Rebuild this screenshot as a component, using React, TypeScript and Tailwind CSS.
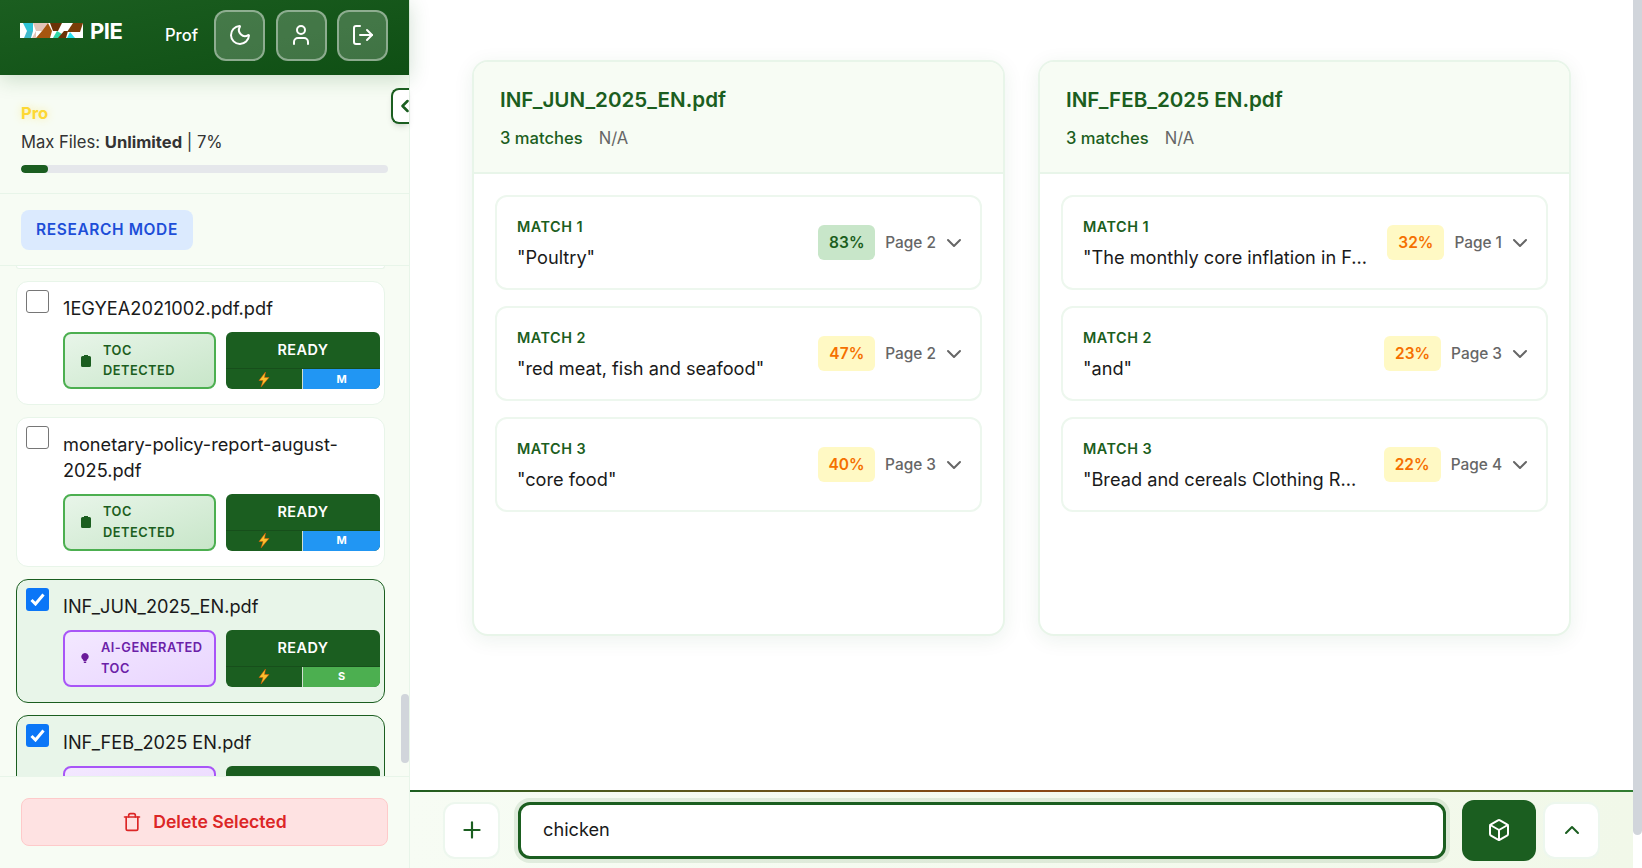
import React from "react";
import { Box, ChevronDown, ChevronLeft, ChevronUp, LogOut, Moon, Plus, Trash, User } from "lucide-react";

interface FileItem {
  name: string;
  checked: boolean;
  ai: boolean;
  size: "M" | "S";
}

interface MatchItem {
  text: string;
  score: number;
  page: number;
}

const files: FileItem[] = [
  { name: "1EGYEA2021002.pdf.pdf", checked: false, ai: false, size: "M" },
  { name: "monetary-policy-report-august-2025.pdf", checked: false, ai: false, size: "M" },
  { name: "INF_JUN_2025_EN.pdf", checked: true, ai: true, size: "S" },
  { name: "INF_FEB_2025 EN.pdf", checked: true, ai: true, size: "S" },
];

const results: { name: string; matches: MatchItem[] }[] = [
  {
    name: "INF_JUN_2025_EN.pdf",
    matches: [
      { text: '"Poultry"', score: 83, page: 2 },
      { text: '"red meat, fish and seafood"', score: 47, page: 2 },
      { text: '"core food"', score: 40, page: 3 },
    ],
  },
  {
    name: "INF_FEB_2025 EN.pdf",
    matches: [
      { text: '"The monthly core inflation in F...', score: 32, page: 1 },
      { text: '"and"', score: 23, page: 3 },
      { text: '"Bread and cereals Clothing R...', score: 22, page: 4 },
    ],
  },
];

const Logo = () => (
  <svg width="63" height="15" viewBox="0 0 63 15" className="shrink-0">
    <rect width="63" height="15" fill="#ffffff" />
    <polygon points="3,0 13,0 13,8 7,8" fill="#2ec4d6" />
    <polygon points="7,8 13,8 11,15 4,15" fill="#3fb8c9" />
    <polygon points="13,0 28,0 22,8 16,8" fill="#e3c4b8" />
    <polygon points="12,15 16,8 16,15" fill="#e3c4b8" />
    <polygon points="16,15 22,8 28,0 32,8 30,15" fill="#a6560f" />
    <polygon points="30,0 42,0 38,8 33,8" fill="#6b3207" />
    <polygon points="33,15 37,8 42,11 40,15" fill="#2fd6a5" />
    <polygon points="38,15 44,8 48,8 46,15" fill="#6b3207" />
    <polygon points="53,0 63,0 60,9 47,9" fill="#7a3d08" />
    <polygon points="47,15 50,9 55,15" fill="#26e0ee" />
  </svg>
);

const Bolt = () => (
  <svg width="12" height="15" viewBox="0 0 12 15">
    <polygon points="7.5,0 1,8.5 5,8.5 3,15 11,5.5 6.5,5.5" fill="#fbc02d" stroke="#e65100" strokeWidth="0.5" />
  </svg>
);

const TocIcon = ({ ai }: { ai: boolean }) =>
  ai ? (
    <svg width="8" height="10" viewBox="0 0 8 10" className="shrink-0">
      <path d="M4 0a3.6 3.6 0 0 1 2.2 6.5L5.4 8H2.6L1.8 6.5A3.6 3.6 0 0 1 4 0z M2.8 8.6h2.4V10H2.800z" fill="#6a1b9a" />
    </svg>
  ) : (
    <svg width="10" height="12" viewBox="0 0 10 12" className="shrink-0">
      <path d="M3 1V0h4v1h1.500A1.500 1.500 0 0 1 10 2.500v8A1.500 1.500 0 0 1 8.500 12h-7A1.500 1.500 0 0 1 0 10.500v-8A1.500 1.500 0 0 1 1.500 1z" fill="#1b5e20" />
    </svg>
  );

const FileCard = ({ file }: { file: FileItem }) => (
  <div
    className={`flex shrink-0 flex-col rounded-[12px] pl-[9px] pr-[4px] pt-[8px] pb-[15px] ${
      file.checked ? "border border-[#1b5e20] bg-[#e8f5e9]" : "border border-[#e8f5e9] bg-white"
    }`}
  >
    <div className="flex items-start gap-[14px]">
      <div
        className={`flex h-[23px] w-[23px] shrink-0 items-center justify-center rounded-[3px] ${
          file.checked ? "bg-[#0b76f7]" : "border border-[#767676] bg-white"
        }`}
      >
        {file.checked && (
          <svg width="15" height="13" viewBox="0 0 15 13">
            <path d="M1.500 7l4 4 8-9.500" fill="none" stroke="#ffffff" strokeWidth="3" />
          </svg>
        )}
      </div>
      <div className="min-w-0 flex-1 pt-[6px]">
        <div className="text-[18.200px] leading-[25.500px] text-[#1a1a1a]">{file.name}</div>
        <div className="mt-[10.500px] flex gap-[10px]">
          <div
            className={`flex h-[57px] w-[153px] items-center gap-[12px] rounded-[8px] border-2 pl-[16px] ${
              file.ai
                ? "border-[#a855f7] bg-gradient-to-br from-[#f3e8ff] to-[#e9d5ff] text-[#6b21a8]"
                : "border-[#4caf50] bg-gradient-to-br from-[#e8f5e9] to-[#c8e6c9] text-[#1b5e20]"
            }`}
          >
            <TocIcon ai={file.ai} />
            <div className="pt-[1px] text-[12.800px] font-semibold leading-[20.500px] tracking-[0.5px]">
              {file.ai ? (
                <>
                  AI-GENERATED
                  <br />
                  TOC
                </>
              ) : (
                <>
                  TOC
                  <br />
                  DETECTED
                </>
              )}
            </div>
          </div>
          <div className="flex h-[57px] w-[154px] flex-col overflow-hidden rounded-[6px] bg-[#1b5e20]">
            <div className="flex h-[36px] items-center justify-center text-[14.400px] font-semibold tracking-[0.5px] text-white">
              READY
            </div>
            <div className="flex h-[21px] border-t border-[#174f1b]">
              <div className="flex w-[77px] items-center justify-center border-r border-white/80">
                <Bolt />
              </div>
              <div
                className={`flex flex-1 items-center justify-center text-[11px] font-bold text-white ${
                  file.size === "M" ? "bg-[#2196f3]" : "bg-[#4caf50]"
                }`}
              >
                {file.size}
              </div>
            </div>
          </div>
        </div>
      </div>
    </div>
  </div>
);

const Sidebar = () => (
  <aside className="relative flex h-full w-[410px] shrink-0 flex-col border-r border-[#e8f5e9] bg-[#f7fcf4]">
    <header className="z-10 flex h-[75px] shrink-0 items-center bg-gradient-to-br from-[#1b5e20] to-[#0f4f14] pb-[5px] pl-[20px] pr-[21px] shadow-[0_4px_20px_rgba(27,94,32,0.2)]">
      <div className="flex items-center pb-[9px]">
        <Logo />
        <span className="ml-[7px] text-[22px] font-bold leading-none tracking-[-0.5px] text-white">PIE</span>
      </div>
      <span className="ml-auto mr-[16px] text-[16.600px] font-medium text-white">Prof</span>
      <div className="flex gap-[10.500px]">
        {[Moon, User, LogOut].map((Icon, i) => (
          <button
            key={i}
            className="flex h-[51px] w-[51px] items-center justify-center rounded-[12px] border-2 border-white/40 bg-white/20 text-white"
          >
            <Icon size={24} strokeWidth={2} />
          </button>
        ))}
      </div>
    </header>

    {/* Collapse tab */}
    <div className="absolute right-0 top-[88px] z-20 flex h-[36px] w-[18px] items-center overflow-hidden rounded-l-[8px] border-2 border-r-0 border-[#1b5e20] bg-white shadow-md">
      <ChevronLeft size={20} strokeWidth={3} className="ml-[2px] shrink-0 text-[#1b5e20]" />
    </div>

    <div className="shrink-0 border-b border-[#e8f5e9] px-[21px] pt-[28px] pb-[20px]">
      <div className="text-[16.600px] font-bold leading-[20px] text-[#fdd835] [text-shadow:0_0_8px_rgba(253,216,53,0.4)]">
        Pro
      </div>
      <div className="mt-[8.500px] text-[16.600px] leading-[20px] text-[#333333]">
        Max Files: <span className="font-bold">Unlimited</span> | 7%
      </div>
      <div className="mt-[13.500px] h-[8px] w-full overflow-hidden rounded-full bg-[#e5e7eb]">
        <div className="h-full rounded-full bg-[#1b5e20]" style={{ width: "7.300%" }} />
      </div>
    </div>

    <div className="shrink-0 border-b border-[#e8f5e9] px-[21px] pt-[16px] pb-[15px]">
      <button className="flex h-[40px] w-[172px] items-center justify-center rounded-[8px] bg-[#dbeafe] text-[15.500px] font-semibold tracking-[0.6px] text-[#1d4ed8]">
        RESEARCH MODE
      </button>
    </div>

    <div className="relative min-h-0 flex-1 overflow-hidden pl-[16px] pr-[24px]">
      <div className="h-[3px] rounded-b-[12px] border-x border-b border-[#e8f5e9] bg-white" />
      <div className="mt-[12px] flex flex-col gap-[12px]">
        {files.map((f) => (
          <FileCard key={f.name} file={f} />
        ))}
      </div>
      <div className="absolute right-0 top-[428px] h-[69px] w-[8px] rounded-full bg-[#d1d5db]" />
    </div>

    <div className="z-10 flex h-[92px] shrink-0 items-start border-t border-[#e8f5e9] bg-[#f7fcf4] px-[21px] pt-[21px]">
      <button className="flex h-[48px] w-full items-center justify-center gap-[11px] rounded-[8px] border border-[#fecaca] bg-[#fee2e2] text-[17.600px] font-semibold text-[#dc2626]">
        <Trash size={20} strokeWidth={2} />
        Delete Selected
      </button>
    </div>
  </aside>
);

const ResultCard = ({ name, matches }: { name: string; matches: MatchItem[] }) => (
  <div className="flex h-[576px] flex-col overflow-hidden rounded-[16px] border-2 border-[#e8f5e9] bg-white shadow-[0_4px_20px_rgba(27,94,32,0.08)]">
    <div className="h-[112px] shrink-0 border-b-2 border-[#e8f5e9] bg-[#f7fcf4] px-[26px] pt-[23px]">
      <div className="text-[20.600px] font-semibold leading-[30px] text-[#1b5e20]">{name}</div>
      <div className="mt-[13px] flex gap-[16px] text-[16.600px] leading-[20px]">
        <span className="font-medium text-[#1b5e20]">3 matches</span>
        <span className="text-[#666666]">N/A</span>
      </div>
    </div>
    <div className="flex flex-col gap-[16px] px-[21px] pt-[21px]">
      {matches.map((m, i) => (
        <div
          key={i}
          className="flex h-[95px] items-center justify-between gap-[16px] rounded-[12px] border-2 border-[#edf7ee] bg-white pl-[20px] pr-[14px]"
        >
          <div className="min-w-0">
            <div className="text-[14.400px] font-semibold leading-[20px] tracking-[0.5px] text-[#1b5e20]">
              MATCH {i + 1}
            </div>
            <div className="mt-[8px] truncate text-[18.200px] leading-[24px] text-[#1a1a1a]">{m.text}</div>
          </div>
          <div className="flex shrink-0 items-center gap-[10px]">
            <span
              className={`flex h-[35px] w-[57px] items-center justify-center rounded-[6px] text-[15.500px] font-semibold ${
                m.score >= 70 ? "bg-[#c8e6c9] text-[#1b5e20]" : "bg-[#fff9c4] text-[#f57000]"
              }`}
            >
              {m.score}%
            </span>
            <span className="text-[15.400px] font-medium text-[#666666]">Page {m.page}</span>
            <ChevronDown size={24} strokeWidth={2} className="-ml-[4px] text-[#666666]" />
          </div>
        </div>
      ))}
    </div>
  </div>
);

const SearchBar = () => (
  <div className="shrink-0">
    <div className="h-[2px] bg-gradient-to-r from-[#1b5e20] via-[#8b4513] to-[#2e7d32]" />
    <div className="flex h-[76px] items-center bg-gradient-to-r from-[#f7fcf4] to-[#f1f8e9] pl-[33px] pr-[33px]">
      <button className="flex h-[57px] w-[57px] shrink-0 items-center justify-center rounded-[12px] border-2 border-[#edf7ee] bg-white text-[#1b5e20]">
        <Plus size={26} strokeWidth={2} />
      </button>
      <div className="ml-[18px] flex h-[57px] min-w-0 flex-1 items-center rounded-[12px] border-[3px] border-[#1b5e20] bg-white pl-[22px] text-[18.200px] text-[#1a1a1a] shadow-[0_0_0_4px_rgba(27,94,32,0.1)]">
        chicken
      </div>
      <button className="ml-[16px] flex h-[61px] w-[74px] shrink-0 items-center justify-center rounded-[12px] bg-[#1b5e20] text-white">
        <Box size={24} strokeWidth={2} />
      </button>
      <button className="ml-[7px] flex h-[57px] w-[57px] shrink-0 items-center justify-center rounded-[12px] border-2 border-[#edf7ee] bg-white text-[#1b5e20]">
        <ChevronUp size={24} strokeWidth={2} />
      </button>
    </div>
  </div>
);

export default function App() {
  return (
    <div className="flex h-screen w-full overflow-hidden bg-white font-[Inter,sans-serif]">
      <Sidebar />
      <main className="flex h-full min-w-0 flex-1 flex-col">
        <div className="min-h-0 flex-1 overflow-hidden px-[62px] pt-[60px]">
          <div className="grid grid-cols-2 gap-[33px]">
            {results.map((r) => (
              <ResultCard key={r.name} name={r.name} matches={r.matches} />
            ))}
          </div>
        </div>
        <SearchBar />
      </main>
      {/* Page scrollbar */}
      <div className="h-full w-[9px] shrink-0 bg-white">
        <div className="h-[835px] w-full rounded-b-full bg-[#d1d5db]" />
      </div>
    </div>
  );
}
